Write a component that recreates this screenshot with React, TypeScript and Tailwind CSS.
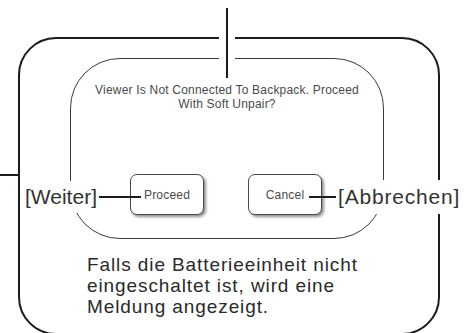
const sans = "font-['Liberation_Sans',Arial,sans-serif]";

export default function App() {
  return (
    <div className={`relative w-[471px] h-[333px] overflow-hidden bg-white ${sans}`}>
      {/* outer device frame */}
      <div className="ml-[18px] mt-[37px] w-[422px] h-[298px] rounded-[38px] border-2 border-[#1c1c1c] pt-[19px] pl-[50px]">
        {/* dialog */}
        <div className="flex w-[314px] h-[181px] flex-col items-center rounded-[50px] border border-[#3a3a3a] pt-[24px]">
          <p className="text-center text-[12px] leading-[14px] tracking-[0.2px] text-[#4a4a4a]">
            Viewer Is Not Connected To Backpack. Proceed
            <br />
            With Soft Unpair?
          </p>
          <div className="mt-[63px] flex w-full justify-between pl-[59px] pr-[61px]">
            <Btn label="Proceed" />
            <Btn label="Cancel" />
          </div>
        </div>
        <p className="ml-[17px] mt-[15px] text-[19px] leading-[21px] tracking-[0.9px] text-[#2a2a2a]">
          Falls die Batterieeinheit nicht
          <br />
          eingeschaltet ist, wird eine
          <br />
          Meldung angezeigt.
        </p>
      </div>

      {/* callout: top, breaking both frame lines */}
      <div className="absolute left-[219px] top-[8px] flex w-[16px] flex-col items-center">
        <div className="h-[25px] w-[2px] bg-[#1c1c1c]" />
        <div className="flex h-[30px] w-full justify-center bg-white">
          <div className="h-full w-[2px] bg-[#1c1c1c]" />
        </div>
        <div className="h-[15px] w-[2px] bg-[#1c1c1c]" />
      </div>

      {/* callout: left */}
      <div className="absolute left-0 top-[174px] h-[2px] w-[18px] bg-[#1c1c1c]" />

      {/* callout: Weiter */}
      <div className="absolute left-[23px] top-[181px] flex items-center">
        <span className="bg-white px-[2px] text-[21px] leading-[32px] text-[#333]">[Weiter]</span>
        <div className="h-[2px] w-[42px] bg-[#1c1c1c]" />
      </div>

      {/* callout: Abbrechen */}
      <div className="absolute left-[309px] top-[180px] flex items-center">
        <div className="h-[2px] w-[27px] bg-[#1c1c1c]" />
        <span className="bg-white px-[2px] text-[21px] leading-[34px] tracking-[0.8px] text-[#333]">
          [Abbrechen]
        </span>
      </div>
    </div>
  );
}

function Btn({ label }: { label: string }) {
  return (
    <div className="flex h-[41px] w-[74px] items-center justify-center rounded-[7px] border border-[#4a4a4a] bg-white text-[12px] tracking-[0.2px] text-[#4a4a4a] shadow-[2px_2px_3px_rgba(0,0,0,0.45)]">
      {label}
    </div>
  );
}
